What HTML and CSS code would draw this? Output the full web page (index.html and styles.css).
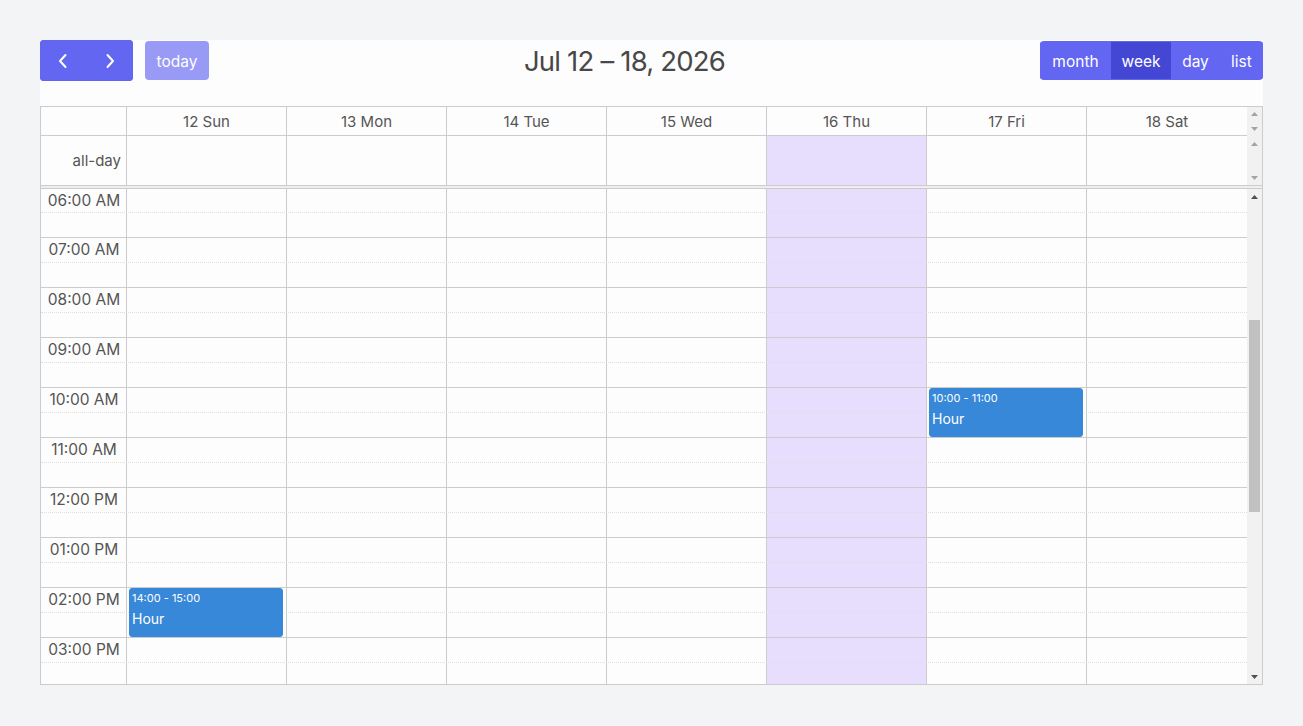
FILE: index.html
```html
<!DOCTYPE html>
<html lang="en">
<head>
<meta charset="utf-8">
<title>Calendar</title>
<link rel="stylesheet" href="styles.css">
</head>
<body>
<div class="cal">
  <div class="toolbar">
    <div class="left">
      <div class="group nav">
        <button class="btn icon" aria-label="prev"><svg width="12" height="16" viewBox="0 0 12 16"><path d="M8.5 2 3 8l5.5 6"/></svg></button>
        <button class="btn icon" aria-label="next"><svg width="12" height="16" viewBox="0 0 12 16"><path d="M3.5 2 9 8l-5.5 6"/></svg></button>
      </div>
      <button class="btn today">today</button>
    </div>
    <h2 class="title">Jul 12 – 18, 2026</h2>
    <div class="group views">
      <button class="btn v-month">month</button>
      <button class="btn v-week active">week</button>
      <button class="btn v-day">day</button>
      <button class="btn v-list">list</button>
    </div>
  </div>

  <div class="table">
    <div class="section head">
      <div class="cols">
        <div class="cell axis"></div>
        <div class="cell">12 Sun</div>
        <div class="cell">13 Mon</div>
        <div class="cell">14 Tue</div>
        <div class="cell">15 Wed</div>
        <div class="cell">16 Thu</div>
        <div class="cell">17 Fri</div>
        <div class="cell last">18 Sat</div>
      </div>
      <div class="gutter">
        <div class="sb-btn"><svg class="arr off" width="7" height="4" viewBox="0 0 7 4"><path d="M0 4h7L3.5 0z"/></svg></div>
        <div class="sb-btn"><svg class="arr off" width="7" height="4" viewBox="0 0 7 4"><path d="M0 0h7L3.5 4z"/></svg></div>
      </div>
    </div>
    <div class="section allday">
      <div class="cols">
        <div class="cell axis">all-day</div>
        <div class="cell"></div>
        <div class="cell"></div>
        <div class="cell"></div>
        <div class="cell"></div>
        <div class="cell is-today"></div>
        <div class="cell"></div>
        <div class="cell last"></div>
      </div>
      <div class="gutter">
        <div class="sb-btn"><svg class="arr off" width="7" height="4" viewBox="0 0 7 4"><path d="M0 4h7L3.5 0z"/></svg></div>
        <div class="sb-btn"><svg class="arr off" width="7" height="4" viewBox="0 0 7 4"><path d="M0 0h7L3.5 4z"/></svg></div>
      </div>
    </div>
    <div class="divider"></div>
    <div class="section body">
      <div class="tg">
        <div class="cols bgcols">
          <div class="col"></div>
          <div class="col"></div>
          <div class="col"></div>
          <div class="col"></div>
          <div class="col"></div>
          <div class="col is-today"></div>
          <div class="col"></div>
          <div class="col last"></div>
        </div>
        <div class="slots">
          <div class="slot"><span class="lbl">06:00 AM</span></div><div class="slot end"></div>
          <div class="slot"><span class="lbl">07:00 AM</span></div><div class="slot end"></div>
          <div class="slot"><span class="lbl">08:00 AM</span></div><div class="slot end"></div>
          <div class="slot"><span class="lbl">09:00 AM</span></div><div class="slot end"></div>
          <div class="slot"><span class="lbl">10:00 AM</span></div><div class="slot end"></div>
          <div class="slot"><span class="lbl">11:00 AM</span></div><div class="slot end"></div>
          <div class="slot"><span class="lbl">12:00 PM</span></div><div class="slot end"></div>
          <div class="slot"><span class="lbl">01:00 PM</span></div><div class="slot end"></div>
          <div class="slot"><span class="lbl">02:00 PM</span></div><div class="slot end"></div>
          <div class="slot"><span class="lbl">03:00 PM</span></div><div class="slot end"></div>
        </div>
        <div class="cols events">
          <div class="ev" style="grid-column: 7; grid-row: 9 / span 2;">
            <div class="ev-time">10:00 - 11:00</div>
            <div class="ev-title">Hour</div>
          </div>
          <div class="ev" style="grid-column: 2; grid-row: 17 / span 2;">
            <div class="ev-time">14:00 - 15:00</div>
            <div class="ev-title">Hour</div>
          </div>
        </div>
      </div>
      <div class="gutter">
        <div class="sb-btn"><svg class="arr" width="7" height="4" viewBox="0 0 7 4"><path d="M0 4h7L3.5 0z"/></svg></div>
        <div class="track"><div class="thumb"></div></div>
        <div class="sb-btn"><svg class="arr" width="7" height="4" viewBox="0 0 7 4"><path d="M0 0h7L3.5 4z"/></svg></div>
      </div>
    </div>
  </div>
</div>
</body>
</html>
```

FILE: styles.css
```css
* { box-sizing: border-box; }
html, body { margin: 0; }
body {
  background: #f3f4f6;
  font-family: Inter, "Noto Sans", sans-serif;
  color: #444;
}
.cal {
  margin: 40px;
  background: #fdfdfd;
}

/* toolbar */
.toolbar {
  display: flex;
  justify-content: space-between;
  align-items: center;
  height: 41px;
  margin-bottom: 25px;
}
.left { display: flex; align-items: center; }
.group { display: flex; border-radius: 4px; overflow: hidden; background: #6366f1; }
.btn {
  border: 0;
  margin: 0;
  background: #6366f1;
  color: #fff;
  font: inherit;
  font-size: 15.5px;
  padding: 2px 11px 0;
  height: 39px;
  cursor: pointer;
}
.nav .btn.icon {
  width: 46.5px;
  height: 41px;
  padding: 0;
  display: flex;
  align-items: center;
  justify-content: center;
}
.icon svg path { fill: none; stroke: #fff; stroke-width: 2; stroke-linecap: round; stroke-linejoin: round; }
.today {
  width: 64px;
  padding: 2px 0 0;
  margin-left: 12px;
  border-radius: 4px;
  opacity: .65;
}
.title {
  margin: 0;
  font-size: 27.5px;
  font-weight: 400;
  letter-spacing: -0.8px;
  color: #484848;
}
.views { padding: 1px 0; }
.views .btn { height: 37px; padding: 2px 0 0; }
.v-month { width: 71px; }
.v-week { width: 60px; }
.v-day { width: 49px; }
.v-list { width: 43px; }
.views .btn.active { background: #4447d4; }

/* table */
.table {
  border: 1px solid #ccc;
  height: 579px;
  display: flex;
  flex-direction: column;
}
.section { display: flex; flex: none; }
.cols { display: grid; grid-template-columns: 86px repeat(7, 160px); width: 1206px; }
.gutter {
  width: 15px;
  flex: none;
  background: #f1f1f1;
  display: flex;
  flex-direction: column;
  justify-content: space-between;
}
.sb-btn {
  height: 15px;
  flex: 0 1 15px;
  display: flex;
  align-items: center;
  justify-content: center;
}
.arr path { fill: #505050; }
.arr.off path { fill: #a3a3a3; }
.track { flex: 1; padding-top: 116px; }
.thumb { height: 192px; margin: 0 2px; background: #c1c1c1; }

.head { height: 29px; }
.head .cell {
  height: 29px;
  border-right: 1px solid #ccc;
  border-bottom: 1px solid #ccc;
  display: flex;
  align-items: center;
  justify-content: center;
  font-size: 15px;
  color: #555;
}
.allday { height: 49px; }
.allday .cell {
  height: 49px;
  border-right: 1px solid #ccc;
}
.allday .axis {
  display: flex;
  align-items: center;
  justify-content: flex-end;
  padding: 0 5px 0 0;
  font-size: 15px;
  color: #555;
}
.cols .last { border-right: 0; }
.is-today { background: #e6defc; }
.divider {
  flex: none;
  height: 4px;
  background: #eee;
  border-top: 1px solid #ccc;
  border-bottom: 1px solid #ccc;
}
.body { flex: 1; min-height: 0; overflow: hidden; }

.tg { display: grid; width: 1206px; align-self: flex-start; }
.tg > * { grid-area: 1 / 1; }
.bgcols .col { border-right: 1px solid #ccc; }
.bgcols .col.last { border-right: 0; }

.slots { display: grid; grid-template-rows: 24px repeat(19, 25px); }
.slot { border-bottom: 1px dotted #ddd; display: flex; }
.slot.end { border-bottom: 1px solid #ccc; }
.lbl {
  width: 86px;
  text-align: center;
  font-size: 15.5px;
  line-height: 20px;
  padding-top: 2px;
  color: #555;
}

.events { grid-template-rows: 24px repeat(19, 25px); }
.ev {
  margin: 0 4px 1px 2px;
  background: #3788d8;
  border: 1px solid #3788d8;
  border-radius: 3px;
  color: #fff;
  padding: 2px 2px 0 2px;
  overflow: hidden;
}
.ev-time { font-size: 11px; line-height: 14px; }
.ev-title { font-size: 14px; line-height: 20px; margin-top: 4px; }
```
